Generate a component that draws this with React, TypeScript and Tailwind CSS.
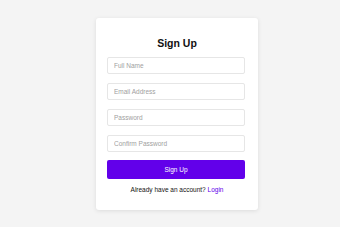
export default function App() {
  const fields = ["Full Name", "Email Address", "Password", "Confirm Password"];
  return (
    <div className="flex min-h-[227px] justify-center bg-[#f4f4f4] pl-[14px] pt-[18px] font-['Liberation_Sans',Arial,sans-serif]">
      <div className="flex h-[192px] w-[162px] flex-col rounded-[3px] bg-white px-[11px] shadow-[0_1px_4px_rgba(0,0,0,0.1)]">
        <h1 className="mt-[19px] text-center text-[10.5px] font-bold leading-[13px] text-[#111]">Sign Up</h1>
        <div className="mt-[7px] flex flex-col gap-[9px]">
          {fields.map((f) => (
            <input
              key={f}
              type={f.includes("Password") ? "password" : "text"}
              placeholder={f}
              className="h-[17px] w-[138px] rounded-[2px] border border-[#e6e6e6] px-[6px] text-[6.5px] placeholder:text-[#a0a0a0] outline-none"
            />
          ))}
        </div>
        <button className="mt-[8px] h-[19px] w-[138px] rounded-[2px] bg-[#6200ea] text-[6.5px] text-white">Sign Up</button>
        <p className="mt-[6px] text-center text-[6.5px] leading-[9px] text-[#111]">
          Already have an account? <span className="text-[#6200ea]">Login</span>
        </p>
      </div>
    </div>
  );
}
